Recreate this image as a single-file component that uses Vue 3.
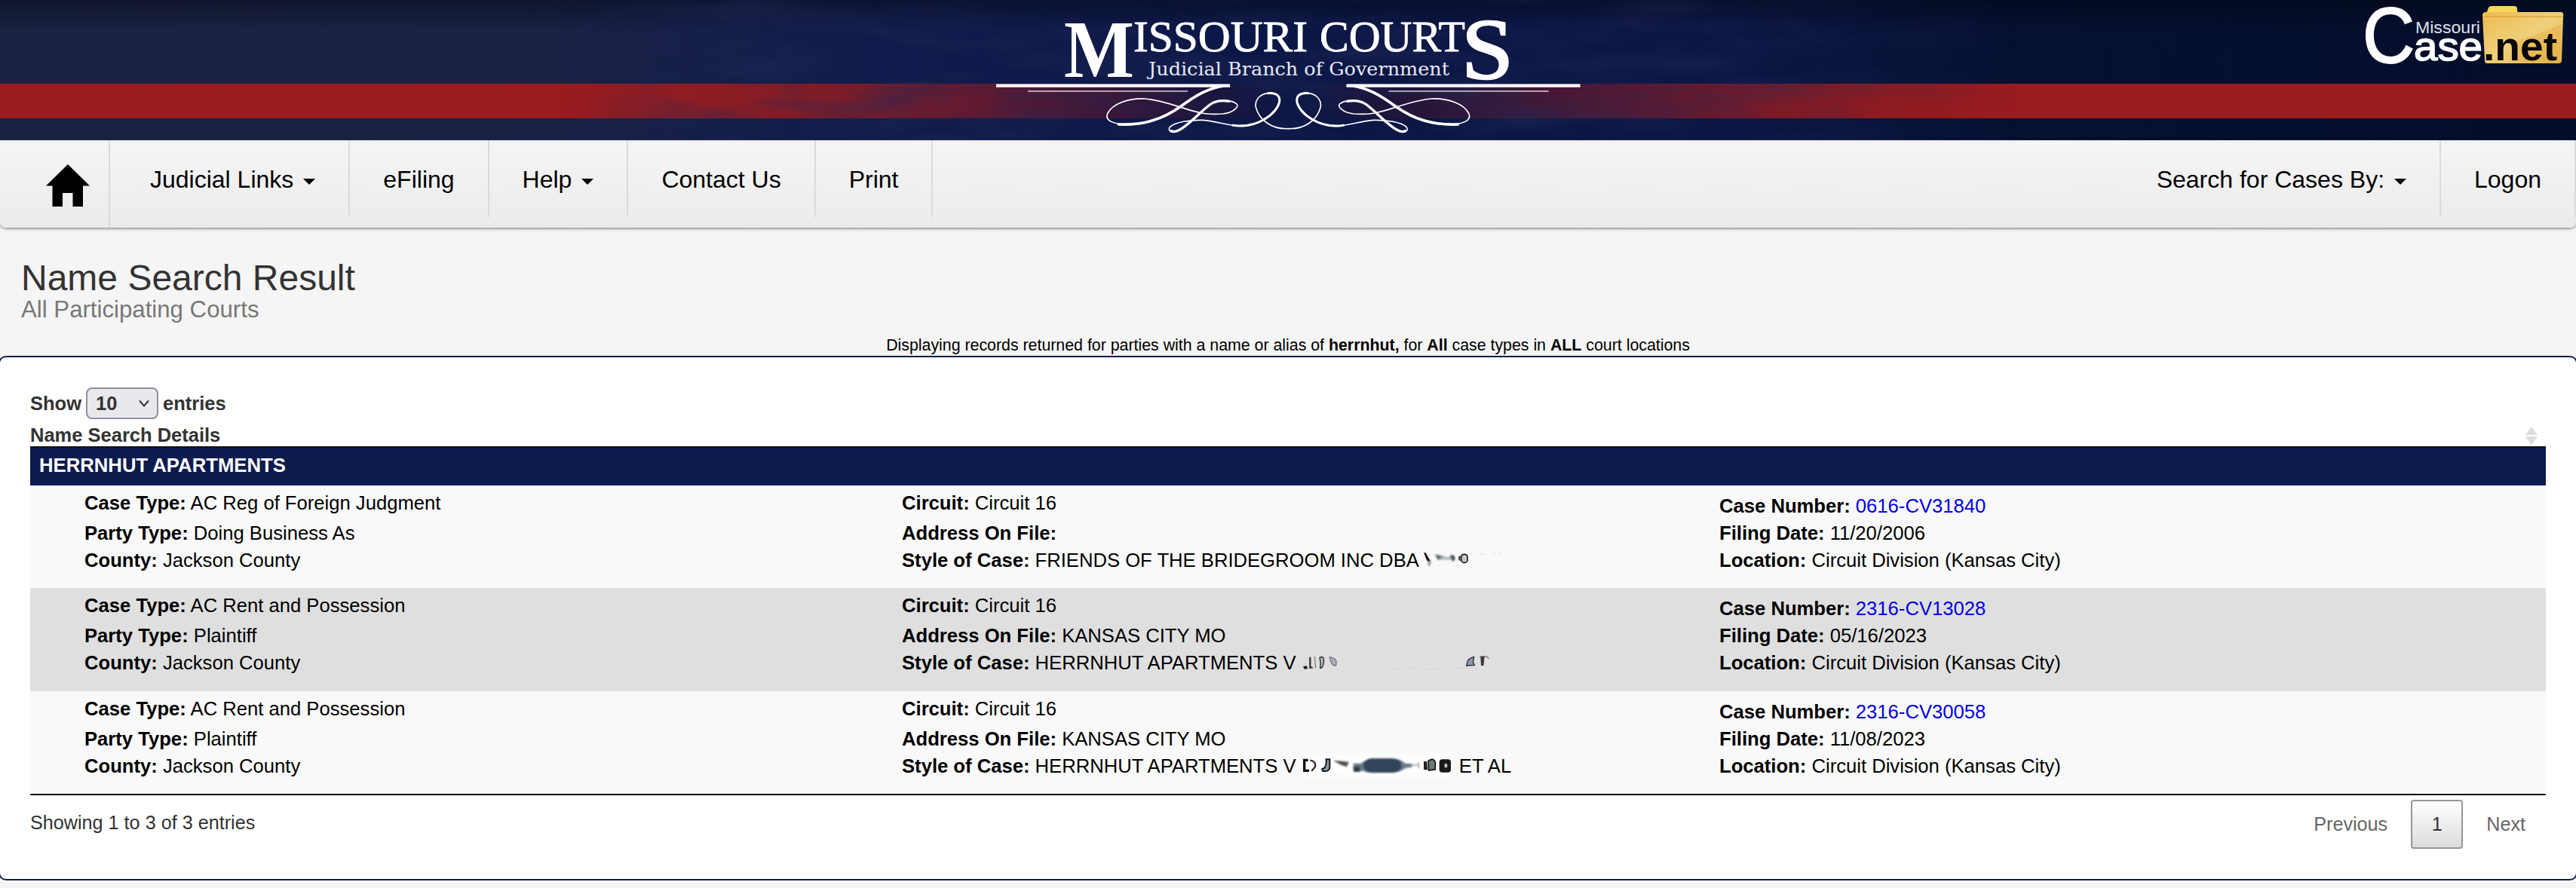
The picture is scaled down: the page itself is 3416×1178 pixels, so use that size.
<template>
  <div class="page">
    <header class="banner">
      <svg class="banner-texture" width="1940" height="186">
        <filter id="grain" x="0" y="0" width="100%" height="100%" color-interpolation-filters="sRGB">
          <feTurbulence type="fractalNoise" baseFrequency="0.006 0.03" numOctaves="4" seed="8" />
          <feColorMatrix values="0 0 0 0 0.13  0 0 0 0 0.16  0 0 0 0 0.34  1.4 1.2 0 0 -1.05" />
        </filter>
        <rect width="1940" height="186" filter="url(#grain)" />
      </svg>

      <svg class="brand" viewBox="1300 0 820 186" width="820" height="186" fill="#fff">
        <g class="brand-serif">
          <text x="1411" y="102" font-size="108" font-weight="bold" textLength="93" lengthAdjust="spacingAndGlyphs">M</text>
          <text x="1503" y="68" font-size="57" stroke="#fff" stroke-width=".8" textLength="231" lengthAdjust="spacingAndGlyphs">ISSOURI</text>
          <text x="1750" y="68" font-size="57" stroke="#fff" stroke-width=".8" textLength="193" lengthAdjust="spacingAndGlyphs">COURT</text>
          <text x="1938" y="104" font-size="115" stroke="#fff" stroke-width="2.5" textLength="69" lengthAdjust="spacingAndGlyphs">S</text>
        </g>
        <text x="1523" y="100" font-size="23.500" class="brand-sub" textLength="399" lengthAdjust="spacingAndGlyphs">Judicial Branch of Government</text>
        <!-- Adorno caligráfico, mitad izquierda y su reflejo -->
        <g v-for="side in flourish" :key="side.id" :transform="side.transform" fill="none" stroke="#fff" stroke-linecap="round">
          <path d="M-402 26H528" stroke-width="13" stroke-linecap="butt" />
          <path d="M-276 48H360" stroke-width="5" stroke-linecap="butt" opacity=".8" />
          <path
            d="M525 25C450 34 400 60 330 110C260 158 190 186 110 181C50 176 30 160 42 135C60 100 120 75 190 78C240 82 290 98 345 116C400 134 440 143 500 138C545 132 572 105 550 95C520 80 480 84 455 97C420 118 360 190 320 205C295 217 278 205 290 190C310 170 370 162 420 163C480 168 520 187 580 187C645 185 715 135 725 90C728 58 700 52 680 56C640 60 625 90 632 115C645 160 690 200 760 197"
            stroke-width="5"
          />
          <path d="M500 27C440 38 400 60 330 110C260 158 190 184 85 180" stroke-width="11" />
          <path d="M525 88C490 82 470 88 455 97C420 118 360 190 320 205C310 209 300 210 295 206" stroke-width="10" />
          <path d="M540 184C640 198 715 135 725 90C728 64 710 54 680 56" stroke-width="9" />
        </g>
      </svg>

      <svg class="casenet" viewBox="3130 0 286 100" width="286" height="100">
        <defs>
          <linearGradient id="folder" x1="0" y1="0" x2="1" y2="1">
            <stop offset="0" stop-color="#eebb50" />
            <stop offset=".5" stop-color="#efd07c" />
            <stop offset="1" stop-color="#e6b043" />
          </linearGradient>
        </defs>
        <path d="M3297 18L3300 10Q3301 8 3304 8H3334Q3338 8 3338 12L3339 22H3296Z" fill="#f7d55c" />
        <path d="M3292 20Q3292 16 3297 16H3396Q3400 16 3399 22L3397 80Q3397 84 3393 84H3298Q3295 84 3295 80Z" fill="url(#folder)" />
        <path d="M3293 22H3398" stroke="#dca53c" stroke-width="1.5" />
        <path d="M3397 32Q3370 45 3335 54L3333 82H3395Z" fill="#e4b045" opacity=".45" />
        <g class="casenet-text">
          <text x="3133" y="83" font-size="103" fill="#fff" stroke="#fff" stroke-width="2" textLength="69" lengthAdjust="spacingAndGlyphs">C</text>
          <text x="3203" y="44" font-size="22" fill="#dfe2ee" textLength="86" lengthAdjust="spacingAndGlyphs">Missouri</text>
          <text x="3201" y="80" font-size="54" fill="#fff" stroke="#fff" stroke-width="1.6" textLength="91" lengthAdjust="spacingAndGlyphs">ase</text>
          <text x="3293" y="80" font-size="54" font-weight="bold" fill="#0a0806" textLength="98" lengthAdjust="spacingAndGlyphs">.net</text>
        </g>
      </svg>
    </header>

    <nav class="navbar">
      <a class="home">
        <svg width="58" height="56" viewBox="0 0 58 56">
          <path d="M29 0L58 28.500H49V56H35.500V38H22V56H8.500V28.500H0Z" fill="#000" />
        </svg>
      </a>
      <a v-for="item in leftMenu" :key="item.label" class="nav-item" :class="{ first: item.first }">
        {{ item.label }}<i v-if="item.caret" class="caret"></i>
      </a>
      <span class="spacer"></span>
      <a v-for="item in rightMenu" :key="item.label" class="nav-item">
        {{ item.label }}<i v-if="item.caret" class="caret"></i>
      </a>
    </nav>

    <div class="heading">
      <h3>Name Search Result</h3>
      <div class="subtitle">All Participating Courts</div>
    </div>
    <p class="criteria">
      Displaying records returned for parties with a name or alias of <b>herrnhut,</b> for <b>All</b> case types in
      <b>ALL</b> court locations
    </p>

    <section class="panel">
      <div class="length">
        Show
        <span class="select">
          10
          <svg width="14" height="10" viewBox="0 0 14 10">
            <path d="M1 1.500L7 8.500L13 1.500" fill="none" stroke="#333" stroke-width="2" />
          </svg>
        </span>
        entries
      </div>

      <div class="table-head">
        <span>Name Search Details</span>
        <svg width="16" height="24" viewBox="0 0 16 24" fill="#dcdcdc">
          <path d="M8 0L16 11H0Z" />
          <path d="M0 13H16L8 24Z" />
        </svg>
      </div>
      <div class="group">HERRNHUT APARTMENTS</div>

      <div v-for="(row, i) in cases" :key="row.number" class="case" :class="{ even: i % 2 === 1 }">
        <div class="col">
          <div class="lead"><b>Case Type:</b> {{ row.type }}</div>
          <div><b>Party Type:</b> {{ row.party }}</div>
          <div><b>County:</b> Jackson County</div>
        </div>
        <div class="col">
          <div class="lead"><b>Circuit:</b> Circuit 16</div>
          <div><b>Address On File:</b> {{ row.address }}</div>
          <div>
            <b>Style of Case:</b> {{ row.style }}
            <svg v-if="i === 0" class="smudge" width="62" height="19" viewBox="0 0 186 57">
              <g filter="url(#soft)">
                <path d="M44 12L70 10L88 18L120 14L122 34L96 28L60 30Z" fill="#aeb5b9" />
                <path d="M46 6L74 16L56 30Z" fill="#5d686d" />
                <path d="M104 12Q126 4 124 28L116 36Z" fill="#46505c" />
                <path d="M14 24L30 30L24 56L18 50Z" fill="#8a8f8e" />
              </g>
              <path d="M0 1H8L24 31L20 36L12 30Z" fill="#0c0e10" />
              <path d="M138 16L146 12V34L138 30Z" fill="#4f4944" />
              <rect x="149" y="7" width="25" height="33" rx="11" fill="#c3c9ce" stroke="#161a1c" stroke-width="5" />
              <path d="M184 5H192M222 5H242M274 5H284M300 5H310" stroke="#ebebeb" stroke-width="6" />
            </svg>
            <svg v-else-if="i === 1" class="smudge" width="250" height="19" viewBox="0 0 750 57">
              <g filter="url(#haze)">
                <ellipse cx="440" cy="58" rx="310" ry="40" fill="#e2dfe2" />
              </g>
              <path d="M350 54H390M420 50H450M500 56H545M600 52H700" stroke="#d2d0d2" stroke-width="3" />
              <path d="M6 46L20 42L24 54L12 56Z" fill="#111" />
              <path d="M34 8V50H44" stroke="#32373c" stroke-width="7" fill="none" />
              <path d="M52 6L56 52" stroke="#8b9096" stroke-width="5" fill="none" />
              <path d="M72 10Q92 0 88 30Q86 52 74 52Q78 30 72 10Z" fill="#b4bac2" stroke="#22262a" stroke-width="4" />
              <path d="M112 8Q146 14 136 42Q120 48 112 8Z" fill="#aab2bd" stroke="#6b737d" stroke-width="4" />
              <path d="M656 42Q658 12 686 7L682 28L688 40Z" fill="#8d99a9" stroke="#232a33" stroke-width="4" />
              <path d="M708 8Q738 0 744 14" stroke="#777" stroke-width="4" fill="none" />
              <path d="M712 6H728L724 42H714Z" fill="#343a36" />
            </svg>
            <template v-else>
              <svg class="smudge" width="202" height="19" viewBox="0 0 606 57">
                <g filter="url(#haze)">
                  <rect x="10" y="-12" width="580" height="84" fill="#fff" />
                </g>
                <g filter="url(#soft)">
                  <path d="M206 20L236 20Q262 0 280 -1H360Q398 4 412 20L440 22V34L412 40Q390 56 360 58H280Q260 56 244 50L206 50Z" fill="#6a788a" />
                  <rect x="246" y="2" width="152" height="54" rx="30" fill="#33445a" />
                  <path d="M206 34L232 32V54H208Z" fill="#323b43" />
                  <path d="M126 8L188 14L180 34L156 26Z" fill="#4f524f" />
                  <path d="M440 26H462M466 16V40" stroke="#b0b2b4" stroke-width="6" />
                </g>
                <path d="M6 2H26V12H16V44H30V54H6Z" fill="#101316" />
                <path d="M34 8Q58 10 54 34L40 50" fill="none" stroke="#2a3038" stroke-width="7" />
                <path d="M98 4H112V38Q110 54 84 50L82 42Q100 40 98 4Z" fill="#8f99a3" stroke="#13161a" stroke-width="6" />
                <path d="M486 12H498L502 46H486Z" fill="#22262a" />
                <path d="M504 10Q526 -4 532 16V44L506 48Z" fill="#6d786f" stroke="#0e1112" stroke-width="5" />
                <rect x="548" y="4" width="46" height="52" rx="12" fill="#191a1c" />
                <ellipse cx="574" cy="29" rx="6" ry="9" fill="#d8d8d8" stroke="#555" stroke-width="3" />
              </svg>
              ET AL
            </template>
          </div>
        </div>
        <div class="col right">
          <div><b>Case Number:</b> <a class="number">{{ row.number }}</a></div>
          <div><b>Filing Date:</b> {{ row.filed }}</div>
          <div><b>Location:</b> Circuit Division (Kansas City)</div>
        </div>
      </div>

      <div class="table-foot">
        <div class="info">Showing 1 to 3 of 3 entries</div>
        <div class="pager">
          <span>Previous</span>
          <span class="current">1</span>
          <span>Next</span>
        </div>
      </div>
    </section>

    <!-- Filtros compartidos por las manchas de censura -->
    <svg class="defs" width="0" height="0">
      <filter id="soft" x="-20%" y="-50%" width="140%" height="200%"><feGaussianBlur stdDeviation="3" /></filter>
      <filter id="haze" x="-20%" y="-80%" width="140%" height="260%"><feGaussianBlur stdDeviation="14" /></filter>
    </svg>
  </div>
</template>

<script setup>
import { ref } from 'vue'

const flourish = [
  { id: 'left', transform: 'translate(1455 105) scale(0.33333)' },
  { id: 'right', transform: 'translate(1961.500 105) scale(-0.33333 0.33333)' }
]

const leftMenu = ref([
  { label: 'Judicial Links', caret: true, first: true },
  { label: 'eFiling' },
  { label: 'Help', caret: true },
  { label: 'Contact Us' },
  { label: 'Print' }
])

const rightMenu = ref([
  { label: 'Search for Cases By:', caret: true },
  { label: 'Logon' }
])

const cases = ref([
  {
    type: 'AC Reg of Foreign Judgment',
    party: 'Doing Business As',
    address: '',
    style: 'FRIENDS OF THE BRIDEGROOM INC DBA',
    number: '0616-CV31840',
    filed: '11/20/2006'
  },
  {
    type: 'AC Rent and Possession',
    party: 'Plaintiff',
    address: 'KANSAS CITY MO',
    style: 'HERRNHUT APARTMENTS V',
    number: '2316-CV13028',
    filed: '05/16/2023'
  },
  {
    type: 'AC Rent and Possession',
    party: 'Plaintiff',
    address: 'KANSAS CITY MO',
    style: 'HERRNHUT APARTMENTS V',
    number: '2316-CV30058',
    filed: '11/08/2023'
  }
])
</script>

<style>
body {
  margin: 0;
  background: #f5f5f5;
}
</style>

<style scoped>
.page {
  width: 3416px;
  height: 1178px;
  overflow: hidden;
  background: #f5f5f5;
  color: #000;
  font-family: "Liberation Sans", Arial, sans-serif;
}

/* Cabecera */
.banner {
  position: relative;
  display: flex;
  justify-content: flex-end;
  height: 186px;
  background:
    linear-gradient(90deg, #991c1f 0, #991c1f 800px, rgba(153, 28, 31, 0.82) 1080px, rgba(140, 26, 36, 0.65) 1300px, rgba(100, 20, 40, 0.45) 1500px, rgba(50, 16, 40, 0.3) 1620px, rgba(20, 16, 50, 0) 1720px, rgba(70, 20, 40, 0.45) 1880px, rgba(130, 26, 40, 0.6) 2130px, rgba(153, 28, 31, 0.85) 2400px, #991c1f 2640px, #991c1f 100%) 0 111px / 100% 46px no-repeat,
    linear-gradient(180deg, rgba(0, 4, 10, 0.4) 0, rgba(0, 0, 0, 0) 40px),
    linear-gradient(90deg, #1a2242 0, #192144 740px, #111c4c 1150px, #0b1746 1700px, #0c1643 2300px, #061031 2680px, #040e2b 100%);
}

.banner-texture {
  position: absolute;
  left: 740px;
  top: 0;
  opacity: 0.55;
  mask-image: linear-gradient(90deg, transparent, #000 12%, #000 80%, transparent);
}

.brand {
  position: absolute;
  left: 1300px;
  top: 0;
}

.brand-serif {
  font-family: "Liberation Serif", "Times New Roman", serif;
}

.brand-sub {
  fill: #e6e9f5;
  font-family: "DejaVu Serif", serif;
}

.casenet {
  position: relative;
  overflow: visible;
}

.casenet-text {
  font-family: "Liberation Sans", Arial, sans-serif;
}

/* Menú */
.navbar {
  display: flex;
  align-items: flex-start;
  height: 116px;
  box-sizing: border-box;
  border-radius: 0 0 8px 8px;
  background: linear-gradient(#f5f5f5, #ebebeb);
  box-shadow: 0 1px 4px rgba(0, 0, 0, 0.55), inset 0 2px 0 #e9e9ef;
}

.home {
  box-sizing: border-box;
  width: 146px;
  height: 116px;
  padding: 32px 0 0 61px;
  border-right: 2px solid #dadada;
}

.nav-item {
  display: flex;
  box-sizing: border-box;
  height: 102px;
  padding: 30px 44px 0;
  border-right: 2px solid #dadada;
  font-size: 32px;
  line-height: 44px;
  white-space: nowrap;
}

.nav-item.first {
  padding-left: 53px;
}

.caret {
  width: 0;
  height: 0;
  margin: 21px 0 0 13px;
  border: 8px solid transparent;
  border-top-color: #000;
  border-bottom: 0;
}

.spacer {
  flex: 1;
}

/* Título */
.heading {
  padding: 42px 0 0 28px;
}

h3 {
  margin: 0;
  color: #333;
  font-size: 48px;
  font-weight: normal;
  line-height: 49px;
}

.subtitle {
  color: #777;
  font-size: 31.2px;
  line-height: 35px;
}

.criteria {
  margin: 18px 0 2px;
  font-size: 21.33px;
  line-height: 24px;
  text-align: center;
}

/* Resultados */
.panel {
  box-sizing: border-box;
  height: 696px;
  margin: 0 -2px;
  padding: 40px 40px 0;
  border: 2px solid #111d4b;
  border-radius: 10px;
  background: #fff;
}

.length,
.table-head {
  color: #333;
  font-size: 25.5px;
  font-weight: bold;
}

.length {
  display: flex;
  align-items: center;
  gap: 6px;
  height: 42px;
  line-height: 40px;
}

.select {
  display: flex;
  box-sizing: border-box;
  align-items: center;
  justify-content: space-between;
  width: 96px;
  height: 42px;
  padding: 0 10px 0 11px;
  border: 2px solid #8f8f9d;
  border-radius: 8px;
  background: #e9e9ed;
}

.table-head {
  display: flex;
  justify-content: space-between;
  height: 36px;
  box-sizing: border-box;
  padding: 5px 11px 0 0;
  line-height: 32px;
}

.table-head svg {
  margin-top: 5px;
}

.group {
  height: 46px;
  padding: 0 0 4px 12px;
  border-top: 2px solid #111;
  background: #0c1b4d;
  color: #fff;
  font-size: 25.7px;
  font-weight: bold;
  line-height: 46px;
}

.case {
  display: grid;
  grid-template-columns: 1084px 1084px 1fr;
  box-sizing: border-box;
  height: 136.4px;
  padding-left: 72px;
  background: #f9f9f9;
  font-size: 25.63px;
  line-height: 36px;
  white-space: nowrap;
}

.case.even {
  background: #dfdfdf;
}

.col {
  padding-top: 5px;
}

.lead {
  margin-bottom: 4px;
}

.col.right {
  padding-top: 9px;
}

.number {
  color: #0000e6;
}

.smudge {
  overflow: visible;
  vertical-align: baseline;
}

.table-foot {
  display: flex;
  justify-content: space-between;
  border-top: 2px solid #111;
  color: #333;
  font-size: 25.2px;
}

.info {
  padding-top: 18px;
  line-height: 36px;
}

.pager {
  display: flex;
  margin-top: 6px;
  padding-right: 27px;
  color: #666;
  line-height: 65px;
}

.current {
  box-sizing: border-box;
  width: 69px;
  height: 65px;
  margin: 0 31px;
  border: 2px solid #979797;
  border-radius: 4px;
  background: linear-gradient(#fff, #dcdcdc);
  color: #333;
  line-height: 61px;
  text-align: center;
}

.defs {
  position: absolute;
}
</style>
